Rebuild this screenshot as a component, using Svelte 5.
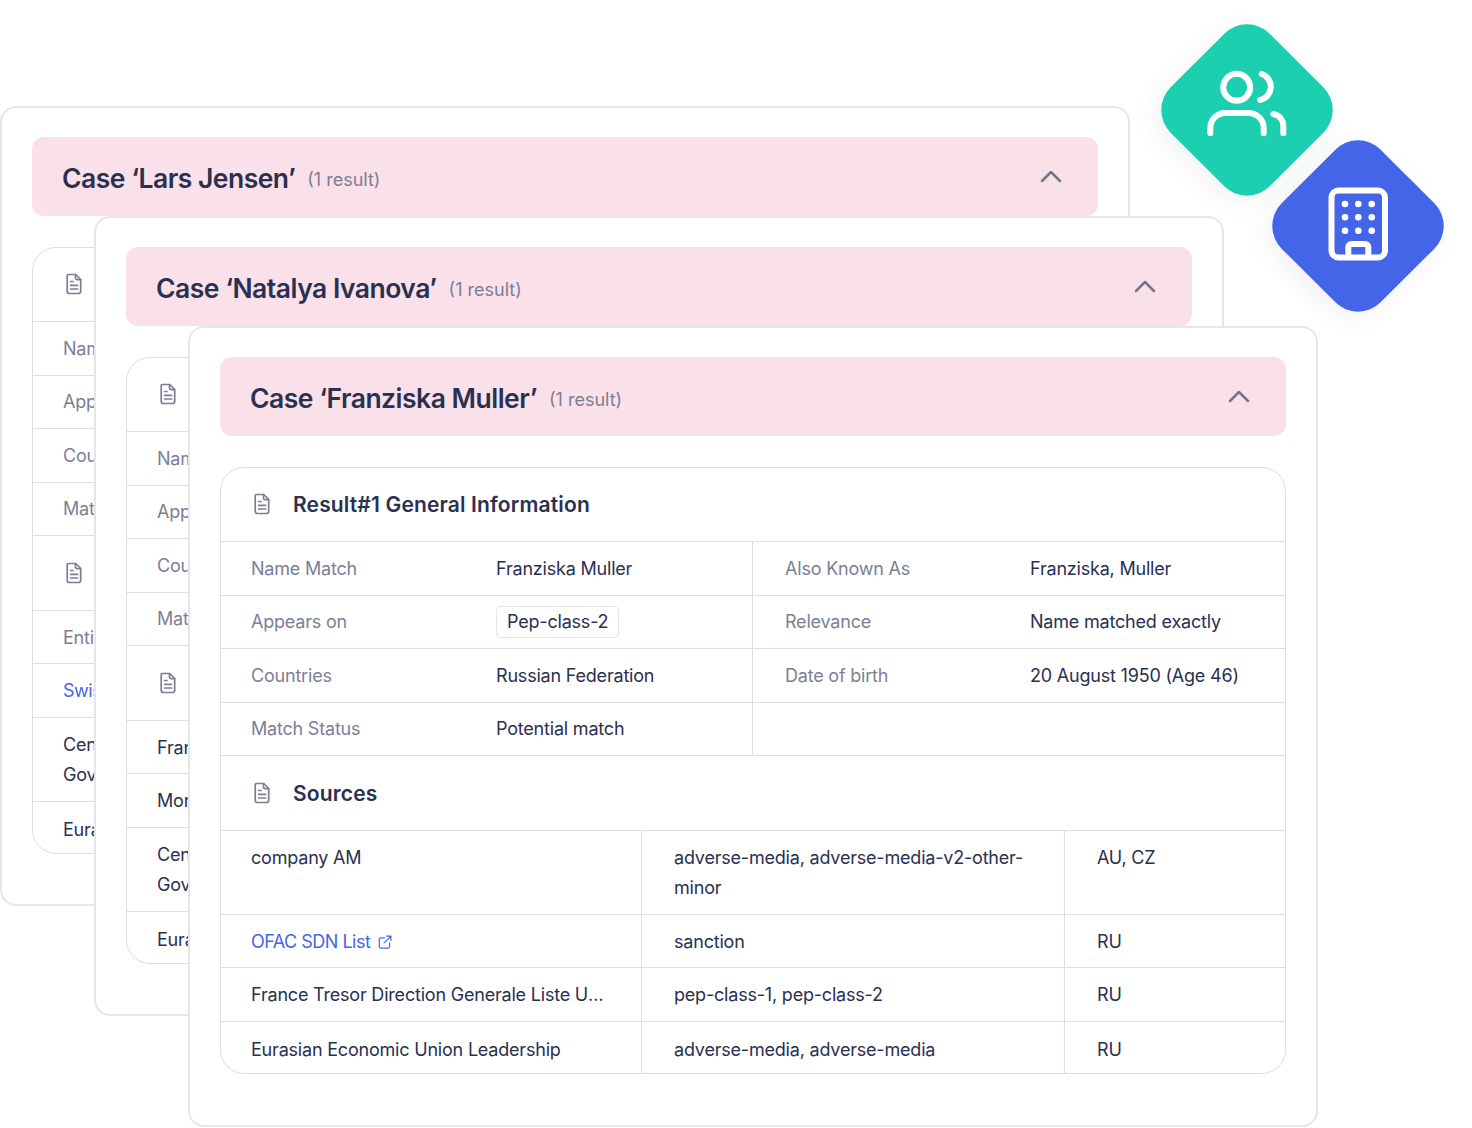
<script>
  const info = (a, b, c, d) => [
    { label: 'Name Match', value: a.name, label2: 'Also Known As', value2: a.aka },
    { label: 'Appears on', value: a.list, tag: true, label2: 'Relevance', value2: 'Name matched exactly' },
    { label: 'Countries', value: b, label2: 'Date of birth', value2: c },
    { label: 'Match Status', value: d, label2: '', value2: '' }
  ];

  const cases = [
    {
      id: 'first',
      name: 'Lars Jensen',
      info: info({ name: 'Lars Jensen', aka: 'Jensen, Lars', list: 'Pep-class-1' }, 'Denmark', '4 May 1961 (Age 63)', 'Potential match'),
      section: 'Sources',
      sources: [
        { name: 'Entity AM', muted: true, types: 'pep-class-1', country: 'DK' },
        { name: 'Swiss SECO List', link: true, types: 'sanction', country: 'DK' },
        { name: 'Central Administration of the Federal Government Register', types: 'adverse-media, adverse-media-v2-other-minor', country: 'DK' },
        { name: 'Eurasian Economic Union Leadership', types: 'adverse-media, adverse-media', country: 'DK' }
      ]
    },
    {
      id: 'second',
      name: 'Natalya Ivanova',
      info: info({ name: 'Natalya Ivanova', aka: 'Ivanova, Natalya', list: 'Pep-class-2' }, 'Russian Federation', '12 March 1958 (Age 51)', 'Potential match'),
      section: 'Sources',
      sources: [
        { name: 'France Tresor Direction Generale', types: 'pep-class-1', country: 'RU' },
        { name: 'Morocco Leadership', types: 'pep-class-2', country: 'RU' },
        { name: 'Central Administration of the Federal Government Register', types: 'adverse-media, adverse-media-v2-other-minor', country: 'RU' },
        { name: 'Eurasian Economic Union Leadership', types: 'adverse-media, adverse-media', country: 'RU' }
      ]
    },
    {
      id: 'third',
      name: 'Franziska Muller',
      info: info({ name: 'Franziska Muller', aka: 'Franziska, Muller', list: 'Pep-class-2' }, 'Russian Federation', '20 August 1950 (Age 46)', 'Potential match'),
      section: 'Sources',
      sources: [
        { name: 'company AM', types: 'adverse-media, adverse-media-v2-other-minor', country: 'AU, CZ' },
        { name: 'OFAC SDN List', link: true, types: 'sanction', country: 'RU' },
        { name: 'France Tresor Direction Generale Liste Unique', types: 'pep-class-1, pep-class-2', country: 'RU' },
        { name: 'Eurasian Economic Union Leadership', types: 'adverse-media, adverse-media', country: 'RU' }
      ]
    }
  ];
</script>

{#snippet doc()}
  <svg class="doc" width="22" height="24" viewBox="0 0 22 24" fill="none" stroke="#7b7f95" stroke-width="1.7" stroke-linejoin="round" stroke-linecap="round">
    <path d="M5.5 2.5h7.2l5 5v11.7a2.3 2.3 0 0 1-2.3 2.3H6.5a2.3 2.3 0 0 1-2.3-2.3V3.8a1.3 1.3 0 0 1 1.3-1.3z" />
    <path d="M12.5 2.7v3.6a1.3 1.3 0 0 0 1.3 1.3h3.7" />
    <path d="M7.6 9.5h2.4M7.6 13.3h7M7.6 17h7" />
  </svg>
{/snippet}

<div class="stage">
  {#each cases as c}
    <section class="card {c.id}">
      <header class="case-head">
        <h2>Case ‘{c.name}’</h2>
        <span class="count">(1 result)</span>
        <svg class="chevron" width="22" height="14" viewBox="0 0 22 14" fill="none" stroke="#74748a" stroke-width="2.5" stroke-linecap="round" stroke-linejoin="round">
          <path d="M2 12l9-9 9 9" />
        </svg>
      </header>

      <div class="panel">
        <div class="panel-title">
          {@render doc()}
          <h3>Result#1 General Information</h3>
        </div>
        <div class="info">
          {#each c.info as row}
            <div class="info-cell">
              <span class="label">{row.label}</span>
              {#if row.tag}
                <span class="value"><span class="tag">{row.value}</span></span>
              {:else}
                <span class="value">{row.value}</span>
              {/if}
            </div>
            <div class="info-cell right">
              <span class="label">{row.label2}</span>
              <span class="value">{row.value2}</span>
            </div>
          {/each}
        </div>
        <div class="panel-title sources-title">
          {@render doc()}
          <h3>{c.section}</h3>
        </div>
        <div class="sources">
          {#each c.sources as s}
            <div class="src-cell name" class:label={s.muted}>
              {#if s.link}
                <span class="link">{s.name}
                  <svg width="14" height="14" viewBox="0 0 15 15" fill="none" stroke="#4565e8" stroke-width="1.3" stroke-linecap="round" stroke-linejoin="round">
                    <path d="M7 3H3a1.6 1.6 0 0 0-1.6 1.6v7.8A1.6 1.6 0 0 0 3 14h7.8a1.6 1.6 0 0 0 1.6-1.6V8.5" />
                    <path d="M9.2 1.2h4.6v4.6M13.6 1.4L6.5 8.5" />
                  </svg>
                </span>
              {:else}
                {s.name}
              {/if}
            </div>
            <div class="src-cell">{s.types}</div>
            <div class="src-cell">{s.country}</div>
          {/each}
        </div>
      </div>
    </section>
  {/each}

  <div class="badge teal">
    <svg width="80" height="70" viewBox="0 0 80 70" fill="none" stroke="#fff" stroke-width="6" stroke-linecap="round" stroke-linejoin="round">
      <circle cx="29.7" cy="17.3" r="13.5" />
      <path d="M54.7 4a13.5 13.5 0 0 1-1.7 26" />
      <path d="M3.3 63.3V58a15 15 0 0 1 15-15h23.4a15 15 0 0 1 15 15v5.3" />
      <path d="M66.3 44a12 12 0 0 1 10 12v7.3" />
    </svg>
  </div>
  <div class="badge blue">
    <svg width="67" height="80" viewBox="0 0 67 80" fill="none" stroke="#fff" stroke-width="6" stroke-linejoin="round">
      <rect x="6.5" y="6.5" width="53.5" height="67" rx="7" />
      <path d="M23.3 73.5V63a3 3 0 0 1 3-3h14a3 3 0 0 1 3 3v10.5" />
      <g fill="#fff" stroke="none">
        <circle cx="20" cy="20" r="3.3" /><circle cx="33.3" cy="20" r="3.3" /><circle cx="46.7" cy="20" r="3.3" />
        <circle cx="20" cy="33.3" r="3.3" /><circle cx="33.3" cy="33.3" r="3.3" /><circle cx="46.7" cy="33.3" r="3.3" />
        <circle cx="20" cy="46.7" r="3.3" /><circle cx="33.3" cy="46.7" r="3.3" /><circle cx="46.7" cy="46.7" r="3.3" />
      </g>
    </svg>
  </div>
</div>

<style>
  :global(body) { background: #fff; }

  .stage {
    position: relative;
    width: 1472px; height: 1128px;
    overflow: hidden;
    font-family: Inter, "Noto Sans", sans-serif;
    color: #2a3050;
  }

  .card {
    position: absolute;
    width: 1130px; height: 800px;
    box-sizing: border-box;
    padding: 29px 30px 30px;
    background: #fff;
    border: 2px solid #e6e6ea;
    border-radius: 16px;
  }
  .first { left: 0; top: 106px; }
  .second { left: 94px; top: 216px; }
  .third { left: 188px; top: 326px; height: 801px; }

  .case-head {
    display: flex; align-items: center;
    height: 79px;
    padding: 0 36px 0 30px;
    background: #fae1e9;
    border-radius: 12px;
  }
  h2 {
    margin: 2px 0 0;
    font-size: 26.5px; font-weight: 600;
    letter-spacing: -0.5px;
    color: #2a3050;
  }
  .count {
    margin-left: 12px; margin-top: 5px;
    font-size: 18px;
    color: #7b7f95;
  }
  .chevron { margin-left: auto; margin-top: -2px; }

  .panel {
    margin-top: 31px;
    border: 1px solid #dcdde5;
    border-radius: 24px;
    overflow: hidden;
  }
  .panel-title {
    display: flex; align-items: center; gap: 20px;
    height: 73px;
    padding-left: 30px;
    border-bottom: 1px solid #dcdde5;
  }
  .sources-title { height: 74.5px; padding-top: 2px; box-sizing: border-box; }
  .doc { flex: none; margin-top: -1px; }
  h3 {
    margin: 0;
    font-size: 21px; font-weight: 600;
    letter-spacing: 0.15px;
    color: #2a3050;
  }

  .info {
    display: grid;
    grid-template-columns: 532px 1fr;
  }
  .info-cell {
    display: grid;
    grid-template-columns: 245px 1fr;
    align-items: center;
    height: 53.5px;
    box-sizing: border-box;
    padding-left: 30px;
    font-size: 18px;
    letter-spacing: -0.2px;
    border-bottom: 1px solid #dcdde5;
    border-right: 1px solid #dcdde5;
  }
  .info-cell.right { padding-left: 32px; border-right: none; }
  .label { color: #7b7f95; }
  .tag {
    display: inline-block;
    padding: 0 10px;
    line-height: 30px;
    border: 1px solid #e3e4ea;
    border-radius: 5px;
  }

  .sources {
    display: grid;
    grid-template-columns: 421px 423px 1fr;
  }
  .src-cell {
    padding: 12px 30px 10px 32px;
    font-size: 18px;
    line-height: 30.5px;
    letter-spacing: -0.2px;
    border-bottom: 1px solid #dcdde5;
    border-right: 1px solid #dcdde5;
  }
  .src-cell:nth-child(3n) { border-right: none; }
  .src-cell:nth-last-child(-n+3) { border-bottom: none; padding-top: 13px; padding-bottom: 8px; }
  .src-cell.name { padding-left: 30px; }
  .third .src-cell.name:nth-child(7) {
    white-space: nowrap; overflow: hidden; text-overflow: ellipsis;
  }
  .link { color: #4565e8; letter-spacing: -0.5px; }
  .link svg { margin-left: 3px; vertical-align: -1px; }

  .badge {
    position: absolute;
    display: flex; align-items: center; justify-content: center;
    width: 172px; height: 172px;
  }
  .badge::before {
    content: '';
    position: absolute;
    left: 16px; top: 16px;
    width: 140px; height: 140px;
    border-radius: 32px;
    transform: rotate(45deg);
    box-shadow: 0 8px 24px rgba(40, 50, 90, 0.07);
  }
  .badge svg { position: relative; }
  .teal { left: 1161px; top: 24px; }
  .teal::before { background: #1bcfb0; }
  .teal svg { margin-top: -10px; }
  .blue { left: 1272px; top: 140px; }
  .blue::before { background: #4565e8; }
  .blue svg { margin-left: 1px; margin-top: -5px; }
</style>
